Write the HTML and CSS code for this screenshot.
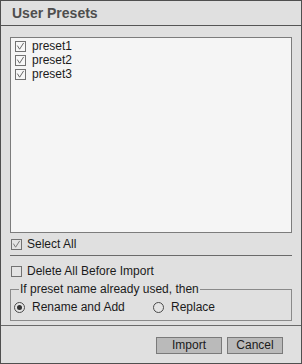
FILE: index.html
```html
<!DOCTYPE html>
<html>
<head>
<meta charset="utf-8">
<link rel="stylesheet" href="styles.css">
</head>
<body>
<div class="window">
  <div class="titlebar">User Presets</div>
  <div class="content">
    <div class="list">
      <div class="item"><span class="cb"><svg viewBox="0 0 10 10"><polyline points="1.5,4 4,8 8.5,1"/></svg></span>preset1</div>
      <div class="item"><span class="cb"><svg viewBox="0 0 10 10"><polyline points="1.5,4 4,8 8.5,1"/></svg></span>preset2</div>
      <div class="item"><span class="cb"><svg viewBox="0 0 10 10"><polyline points="1.5,4 4,8 8.5,1"/></svg></span>preset3</div>
    </div>
    <div class="row select-all"><span class="cb"><svg viewBox="0 0 10 10"><polyline points="1.5,4 4,8 8.5,1"/></svg></span>Select All</div>
    <div class="sep"></div>
    <div class="row delete-row"><span class="cb"></span>Delete All Before Import</div>
    <fieldset class="group">
      <legend>If preset name already used, then</legend>
      <div class="radios">
        <div class="opt first"><span class="radio on"></span>Rename and Add</div>
        <div class="opt"><span class="radio"></span>Replace</div>
      </div>
    </fieldset>
  </div>
  <div class="footer">
    <button class="btn import">Import</button>
    <button class="btn cancel">Cancel</button>
  </div>
</div>
</body>
</html>
```
FILE: styles.css
```css
html, body {
  margin: 0;
  padding: 0;
  background: #e0e0e0;
}
.window {
  box-sizing: border-box;
  width: 302px;
  height: 364px;
  border: 1px solid #4f4f4f;
  background: #e0e0e0;
  display: flex;
  flex-direction: column;
  font-family: "Liberation Sans", Arial, sans-serif;
  font-size: 12px;
  color: #1b1b1b;
}
.titlebar {
  height: 24px;
  line-height: 24px;
  border-bottom: 1px solid #555555;
  padding-left: 11px;
  font-size: 14px;
  font-weight: bold;
  color: #4e4e4e;
}
.content {
  flex: 1;
  padding: 11px 9px 0 9px;
  display: flex;
  flex-direction: column;
}
.list {
  box-sizing: border-box;
  height: 196px;
  border: 1px solid #7c7c7c;
  background: #f5f5f5;
  padding: 1px 0 0 4px;
}
.item {
  height: 14px;
  line-height: 14px;
  display: flex;
  align-items: center;
}
.cb {
  box-sizing: border-box;
  width: 11px;
  height: 11px;
  border: 1px solid #727272;
  background: #f7f7f7;
  margin-right: 6px;
  display: flex;
  align-items: center;
  justify-content: center;
  flex: none;
}
.cb svg {
  width: 9px;
  height: 9px;
  fill: none;
  stroke: #666666;
  stroke-width: 1.1;
}
.row {
  height: 14px;
  line-height: 14px;
  display: flex;
  align-items: center;
  padding-left: 1px;
}
.row .cb {
  background: #e4e4e4;
  margin-right: 5px;
}
.select-all {
  margin-top: 4px;
}
.select-all .cb svg {
  stroke: #7a7a7a;
}
.sep {
  height: 1px;
  background: #6a6a6a;
  margin-top: 4px;
}
.delete-row {
  margin-top: 8px;
}
.group {
  margin: 4px 0 0 0;
  padding: 4px 0 6px 3px;
  border: 1px solid #8a8a8a;
  min-width: 0;
}
.group legend {
  margin-left: 5px;
  padding: 0 1px;
  line-height: 14px;
}
.radios {
  display: flex;
  height: 14px;
  align-items: center;
}
.opt {
  display: flex;
  align-items: center;
  line-height: 14px;
}
.opt.first {
  width: 139px;
}
.radio {
  box-sizing: border-box;
  width: 11px;
  height: 11px;
  border: 1px solid #4a4a4a;
  border-radius: 50%;
  margin-right: 7px;
  display: flex;
  align-items: center;
  justify-content: center;
  background: #e4e4e4;
}
.radio.on::after {
  content: "";
  width: 5px;
  height: 5px;
  border-radius: 50%;
  background: #333333;
}
.footer {
  box-sizing: border-box;
  height: 38px;
  border-top: 1px solid #6a6a6a;
  display: flex;
  justify-content: flex-end;
  align-items: flex-start;
  gap: 5px;
  padding: 11px 18px 0 0;
}
.btn {
  box-sizing: border-box;
  height: 17px;
  border: 1px solid #7a7a7a;
  background: #bababa;
  font-family: "Liberation Sans", Arial, sans-serif;
  font-size: 12px;
  color: #1b1b1b;
  padding: 0;
  line-height: 15px;
  border-radius: 0;
}
.btn.import { width: 66px; }
.btn.cancel { width: 56px; }
```
